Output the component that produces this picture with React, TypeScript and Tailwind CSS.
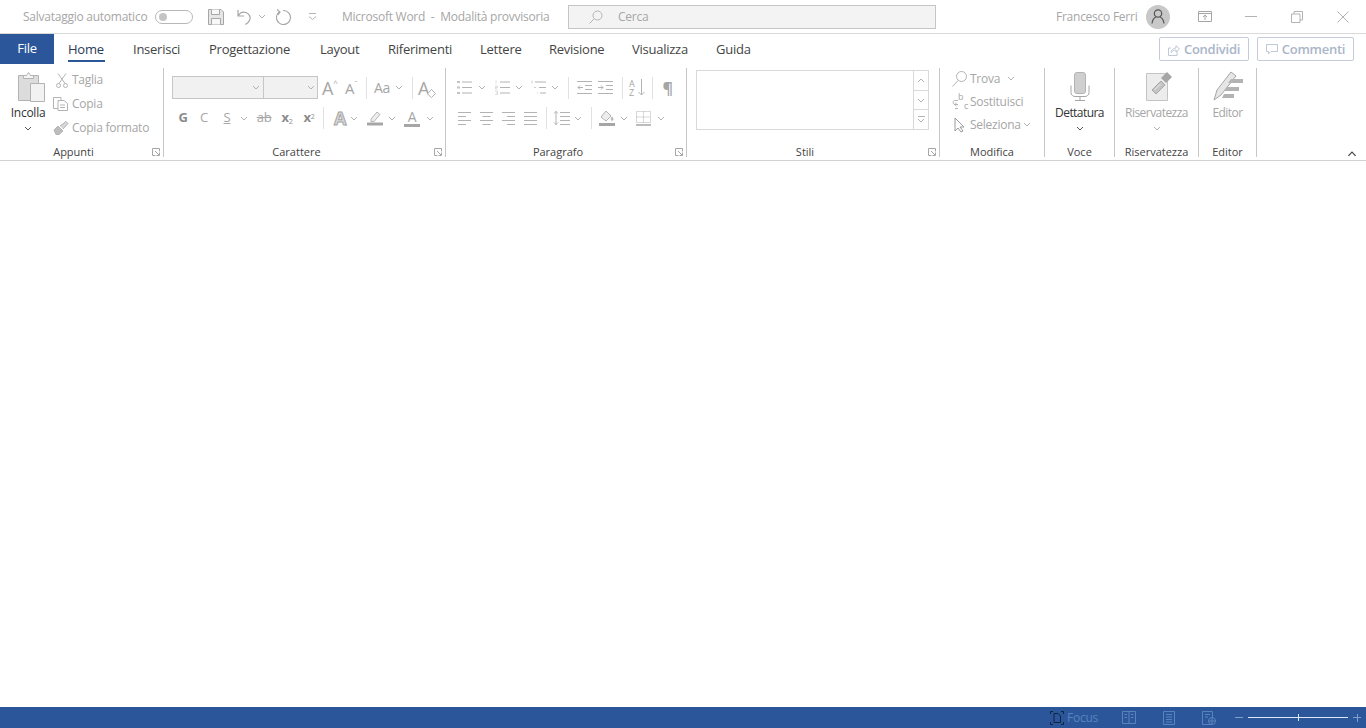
import React from "react";

const FONT = "font-['Open_Sans','Noto_Sans',sans-serif]";
const GRAY = "#b3b3b3";

const Chev = ({ className = "", color = GRAY }: { className?: string; color?: string }) => (
  <svg viewBox="0 0 8 5" className={`w-[8px] h-[5px] shrink-0 ${className}`}>
    <path d="M1 1l3 3 3-3" fill="none" stroke={color} strokeWidth="1" />
  </svg>
);

const Sep = ({ className = "" }: { className?: string }) => <span className={`w-px h-[22px] shrink-0 bg-[#e1e1e1] ${className}`} />;

type IconProps = { className?: string; children: React.ReactNode; view: string };
const Ic = ({ className = "", children, view }: IconProps) => (
  <svg viewBox={view} className={`shrink-0 ${className}`} fill="none" stroke={GRAY} strokeWidth="1">
    {children}
  </svg>
);

const Bullets = ({ kind }: { kind: "dot" | "num" | "multi" }) => (
  <Ic view="0 0 15 15" className="w-[15px] h-[15px]">
    {kind === "dot" && (
      <>
        <path d="M0 2h3M0 7.5h3M0 13h3" strokeWidth="2" stroke="#c4c4c4" />
        <path d="M5 2h10M5 7.5h10M5 13h10" />
      </>
    )}
    {kind === "num" && (
      <>
        <path d="M1 0.5v3M0 6h2.5v1.5H0V9h2.5M0 11h2.5v3.5H0M1 13h1.5" stroke="#cfcfcf" strokeWidth="0.7" />
        <path d="M5 2h10M5 7.5h10M5 13h10" />
      </>
    )}
    {kind === "multi" && (
      <>
        <path d="M1 0.5v3M3 7.5h2M6 13h1" stroke="#cfcfcf" />
        <path d="M4 2h11M8 7.5h7M9 13h6" />
      </>
    )}
  </Ic>
);

const Align = ({ d }: { d: string }) => (
  <Ic view="0 0 13 13" className="w-[13px] h-[13px]">
    <path d={d} />
  </Ic>
);

const Launcher = () => (
  <svg viewBox="0 0 8 8" className="absolute right-[3px] top-[2px] w-[8px] h-[8px]" fill="none" stroke="#a6a6a6">
    <path d="M7.5 3.5V0.5H0.5V7.5H3.5" />
    <path d="M3 3l4 4M7.5 4.5v3h-3" />
  </svg>
);

const Group = ({
  label,
  width,
  launcher,
  children,
}: {
  label: string;
  width: string;
  launcher?: boolean;
  children: React.ReactNode;
}) => (
  <section className={`h-[89px] shrink-0 flex flex-col border-r border-[#c6c6c6] ${width}`}>
    <div className="h-[78px] shrink-0">{children}</div>
    <div className={`relative h-[11px] text-center text-[11px] leading-[12px] tracking-normal text-[#444] ${launcher ? "pr-[16px]" : ""}`}>
      {label}
      {launcher && <Launcher />}
    </div>
  </section>
);

const TABS = [
  { name: "Inserisci", cls: "ml-[28px] w-[46px]" },
  { name: "Progettazione", cls: "ml-[30px] w-[81px]" },
  { name: "Layout", cls: "ml-[30px] w-[38px]" },
  { name: "Riferimenti", cls: "ml-[30px] w-[62px]" },
  { name: "Lettere", cls: "ml-[30px] w-[40px]" },
  { name: "Revisione", cls: "ml-[29px] w-[55px]" },
  { name: "Visualizza", cls: "ml-[28px] w-[56px]" },
  { name: "Guida", cls: "ml-[28px] w-[34px]" },
];

const TitleBar = () => (
  <header className="h-[34px] shrink-0 flex items-center pl-[23px] border-b border-[#d9d9d9] text-[12px] text-[#a6a6a6] whitespace-nowrap">
    <span className="w-[132px]">Salvataggio automatico</span>
    <span className="w-[38px] h-[14px] rounded-full border border-[#b8b8b8] flex items-center pl-[3px]">
      <span className="w-[8px] h-[8px] rounded-full bg-[#c4c4c4]" />
    </span>
    <Ic view="0 0 16 16" className="ml-[15px] w-[16px] h-[16px]">
      <path d="M.5.5h12.5l2.5 2.500v12.500H.5z" fill="#e6e6e6" stroke="#a6a6a6" />
      <path d="M3.500.5v5h8v-5M3.500 15.500v-6h9v6" stroke="#a6a6a6" fill="#f8f8f8" />
    </Ic>
    <Ic view="0 0 15 16" className="ml-[13px] w-[15px] h-[16px]">
      <path d="M1 1v6h6M1.500 6.500C3 3.500 6 2.500 9 3.500c3.500 1.200 5 5 3.500 8-.7 1.500-2 3-4 4" stroke="#a6a6a6" strokeWidth="1.200" />
    </Ic>
    <Chev className="ml-[6px]" />
    <Ic view="0 0 16 16" className="ml-[10px] w-[16px] h-[16px]">
      <path d="M7 1.500a7 7 0 1 1-3.500 1.200M1 .5l3 2.500-2 3" stroke="#a6a6a6" strokeWidth="1.100" />
    </Ic>
    <Ic view="0 0 9 8" className="ml-[16px] w-[9px] h-[8px]">
      <path d="M1 .5h7M1 3.500l3.500 3 3.500-3" />
    </Ic>
    <span className="ml-[25px] w-[226px]">Microsoft Word&nbsp; -&nbsp; Modalità provvisoria</span>
    <div className="w-[368px] h-[24px] bg-[#f3f3f3] border border-[#c6c6c6] flex items-center pl-[20px]">
      <Ic view="0 0 14 14" className="w-[14px] h-[14px]">
        <circle cx="8.500" cy="5.500" r="4.500" />
        <path d="M5 9l-4.500 4.500" />
      </Ic>
      <span className="ml-[15px]">Cerca</span>
    </div>
    <span className="ml-[120px] w-[90px]">Francesco Ferri</span>
    <span className="w-[24px] h-[24px] rounded-full bg-[#c8c8c8] flex items-center justify-center">
      <svg viewBox="0 0 14 15" className="w-[14px] h-[15px]" fill="none" stroke="#555" strokeWidth="1.200">
        <circle cx="7" cy="4.500" r="3.700" />
        <path d="M1 14.500c.5-3.500 2.500-6 4-6.500M13 14.500c-.5-3.500-2.500-6-4-6.500" />
      </svg>
    </span>
    <Ic view="0 0 14 11" className="ml-[28px] w-[14px] h-[11px]">
      <path d="M.5.5h13v10H.5zM.5 2.500h13M7 9V4.500M5 6l2-2 2 2" stroke="#a6a6a6" />
    </Ic>
    <span className="ml-[33px] w-[12px] h-px bg-[#b3b3b3]" />
    <Ic view="0 0 12 12" className="ml-[34px] w-[12px] h-[12px]">
      <path d="M.5 3h8.500v8.500H.5zM3 3V.5h8.500V9H9" />
    </Ic>
    <Ic view="0 0 12 12" className="ml-[34px] w-[12px] h-[12px]">
      <path d="M.5.5l11 11M11.500.5l-11 11" />
    </Ic>
  </header>
);

const TabsRow = () => (
  <nav className="h-[30px] shrink-0 flex items-center pt-px text-[13px] text-[#444] whitespace-nowrap">
    <span className="w-[54px] h-[30px] -mt-px bg-[#2b579a] text-white flex items-center justify-center">File</span>
    <span className="relative ml-[14px] w-[37px] h-[29px] flex items-center font-medium text-[#2b3a55]">
      Home
      <span className="absolute left-0 right-0 bottom-[2px] h-[2px] bg-[#2b579a]" />
    </span>
    {TABS.map((t) => (
      <span key={t.name} className={t.cls}>
        {t.name}
      </span>
    ))}
    <button className="ml-auto -mt-px pt-px w-[90px] h-[24px] rounded-[2px] border border-[#c3ccd8] flex items-center justify-center gap-[4px] font-semibold text-[#a9b6c9]">
      <svg viewBox="0 0 12 12" className="w-[12px] h-[12px]" fill="none" stroke="#c0c9d6">
        <path d="M9 6.500v5H.5V4H3M3 8.500C3.500 5.500 5.500 4 8 4V1.500L11.500 5 8 8V6C6 6 4.500 7 3 8.500z" />
      </svg>
      Condividi
    </button>
    <button className="ml-[8px] -mt-px pt-px mr-[12px] w-[97px] h-[24px] rounded-[2px] border border-[#c3ccd8] flex items-center justify-center gap-[4px] font-semibold text-[#a9b6c9]">
      <svg viewBox="0 0 12 11" className="w-[12px] h-[11px]" fill="none" stroke="#c0c9d6">
        <path d="M.5.5h11v7H5L2.500 10V7.500h-2z" />
      </svg>
      Commenti
    </button>
  </nav>
);

const Appunti = () => (
  <div className="flex">
    <div className="w-[53px] pl-[3px] pt-[4px] flex flex-col items-center">
      <svg viewBox="0 0 28 30" className="ml-[7px] w-[28px] h-[30px]" fill="none">
        <path d="M.5 3.500h20v25H.5z" fill="#dcdcdc" stroke="#b3b3b3" />
        <path d="M5.500 3.500h3L10.500.5l2 3h3v3h-10z" fill="#f4f4f4" stroke="#b3b3b3" />
        <path d="M12.500 11.500h14v18h-14z" fill="#f2f2f2" stroke="#b3b3b3" />
      </svg>
      <span className="mt-[3px] text-[12px] leading-[16px] text-[#333]">Incolla</span>
      <Chev className="mt-[5px]" color="#555" />
    </div>
    <div className="text-[12px] text-[#a6a6a6]">
      <div className="h-[24px] flex items-center">
        <Ic view="0 0 12 15" className="ml-[3px] w-[12px] h-[15px]">
          <path d="M2 .5l7 10M10 .5l-7 10" />
          <circle cx="2.500" cy="12.500" r="2" />
          <circle cx="9.500" cy="12.500" r="2" />
        </Ic>
        <span className="ml-[4px]">Taglia</span>
      </div>
      <div className="h-[24px] flex items-center">
        <Ic view="0 0 16 14" className="w-[16px] h-[14px]">
          <path d="M5 11.500H.5V.5H8L8 3" />
          <path d="M5 3.500h6l3.500 3v7H5zM7 8h5M7 10.500h5" />
        </Ic>
        <span className="ml-[3px]">Copia</span>
      </div>
      <div className="h-[24px] flex items-center">
        <Ic view="0 0 16 14" className="w-[16px] h-[14px]">
          <path d="M1 9l4-4 5 5-4 3.500H3z" fill="#bdbdbd" />
          <path d="M7 5l6-4.500 2 2L10 8" fill="#d6d6d6" />
        </Ic>
        <span className="ml-[3px]">Copia formato</span>
      </div>
    </div>
  </div>
);

const Carattere = () => (
  <div className="pl-[8px] pt-[8px]">
    <div className="flex items-center h-[23px] text-[#a6a6a6]">
      <span className="w-[92px] h-[23px] bg-[#f1f1f1] border border-[#c6c6c6] flex items-center justify-end pr-[3px]">
        <Chev />
      </span>
      <span className="-ml-px w-[55px] h-[23px] bg-[#f1f1f1] border border-[#c6c6c6] flex items-center justify-end pr-[2px]">
        <Chev />
      </span>
      <span className="ml-[4px] w-[16px] flex items-start text-[18px] leading-[20px]">
        A<span className="text-[8px] leading-[10px]">^</span>
      </span>
      <span className="ml-[7px] w-[14px] flex items-start text-[15px] leading-[20px]">
        A<span className="text-[8px] leading-[10px]">ˇ</span>
      </span>
      <Sep className="ml-[7px]" />
      <span className="ml-[7px] w-[19px] text-[14px]">Aa</span>
      <Chev className="ml-[2px]" />
      <Sep className="ml-[9px]" />
      <span className="ml-[5px] relative w-[18px] text-[18px] leading-[20px]">
        A
        <svg viewBox="0 0 9 9" className="absolute right-0 bottom-0 w-[9px] h-[9px]" fill="#fff" stroke={GRAY}>
          <path d="M.5 5l4-4.500 4 4-4 4z" />
        </svg>
      </span>
    </div>
    <div className="mt-[9px] flex items-center h-[20px] text-[13px] text-[#a6a6a6]">
      <span className="w-[22px] text-center font-bold text-[#8c8c8c]">G</span>
      <span className="w-[20px] text-center">C</span>
      <span className="ml-[3px] w-[20px] text-center underline">S</span>
      <Chev className="ml-[3px]" />
      <span className="ml-[6px] w-[20px] text-center line-through">ab</span>
      <span className="ml-[3px] w-[20px] text-center font-bold text-[#8c8c8c]">
        x<sub className="text-[7px] font-normal">2</sub>
      </span>
      <span className="ml-[2px] w-[20px] text-center font-bold text-[#8c8c8c]">
        x<sup className="text-[7px] font-normal">2</sup>
      </span>
      <Sep className="ml-[4px]" />
      <span className="ml-[8px] w-[16px] text-center text-[18px] leading-[20px] font-bold text-[#d9d9d9] [-webkit-text-stroke:1px_#a6a6a6]">A</span>
      <Chev className="ml-[2px]" />
      <Ic view="0 0 16 16" className="ml-[9px] w-[16px] h-[16px]">
        <path d="M4 9l6-7 3 2.500-6 7H4z" fill="#eee" />
        <path d="M0 14h16" stroke="#a6a6a6" strokeWidth="3" />
      </Ic>
      <Chev className="ml-[5px]" />
      <span className="ml-[8px] w-[16px] h-[18px] flex flex-col items-center text-[14px] leading-[15px]">
        A<span className="w-[16px] h-[3px] bg-[#a6a6a6]" />
      </span>
      <Chev className="ml-[6px]" />
    </div>
  </div>
);

const Paragrafo = () => (
  <div className="pt-[8px]">
    <div className="pl-[11px] flex items-center h-[23px]">
      <Bullets kind="dot" />
      <Chev className="ml-[6px]" />
      <span className="ml-[9px]">
        <Bullets kind="num" />
      </span>
      <Chev className="ml-[5px]" />
      <span className="ml-[8px]">
        <Bullets kind="multi" />
      </span>
      <Chev className="ml-[5px]" />
      <Sep className="ml-[9px]" />
      <Ic view="0 0 15 13" className="ml-[8px] w-[15px] h-[13px]">
        <path d="M0 .5h15M8 4.500h7M8 8.500h7M0 12.500h15M6 6.500H1M3 4.500l-2 2 2 2" />
      </Ic>
      <Ic view="0 0 15 13" className="ml-[6px] w-[15px] h-[13px]">
        <path d="M0 .5h15M8 4.500h7M8 8.500h7M0 12.500h15M0 6.500h5M3 4.500l2 2-2 2" />
      </Ic>
      <Sep className="ml-[9px]" />
      <span className="ml-[6px] w-[16px] flex items-center">
        <span className="w-[7px] break-all text-[9px] leading-[9px] tracking-normal text-[#a6a6a6]">AZ</span>
        <Ic view="0 0 7 17" className="ml-[2px] w-[7px] h-[17px]">
          <path d="M3.500 0v16M.5 13l3 3 3-3" />
        </Ic>
      </span>
      <Sep className="ml-[7px]" />
      <span className="ml-[8px] w-[13px] text-center text-[16px] leading-[20px] font-bold text-[#a6a6a6]">¶</span>
    </div>
    <div className="mt-[9px] pl-[12px] flex items-center h-[20px]">
      <Align d="M0 .5h13M0 4.500h8M0 8.500h13M0 12.500h8" />
      <span className="ml-[9px] flex">
        <Align d="M0 .5h13M2.500 4.500h8M0 8.500h13M2.500 12.500h8" />
      </span>
      <span className="ml-[9px] flex">
        <Align d="M0 .5h13M5 4.500h8M0 8.500h13M5 12.500h8" />
      </span>
      <span className="ml-[9px] flex">
        <Align d="M0 .5h13M0 4.500h13M0 8.500h13M0 12.500h13" />
      </span>
      <Sep className="ml-[9px]" />
      <Ic view="0 0 17 14" className="ml-[6px] w-[17px] h-[14px]">
        <path d="M7 1.500h10M7 5.500h10M7 9.500h10M7 13.500h10M3 0v14M1 2.500L3 .5l2 2M1 11.500l2 2 2-2" />
      </Ic>
      <Chev className="ml-[4px]" />
      <Sep className="ml-[9px]" />
      <Ic view="0 0 16 16" className="ml-[7px] w-[16px] h-[16px]">
        <path d="M2 7l5-6 5 5-5 5z" fill="#eee" />
        <path d="M13 7c1 1.500 1.500 3 0 3.500-1 0-1-2 0-3.500z" fill="#bdbdbd" />
        <path d="M0 14.500h16" stroke="#a6a6a6" strokeWidth="3" />
      </Ic>
      <Chev className="ml-[5px]" />
      <Ic view="0 0 15 15" className="ml-[8px] w-[15px] h-[15px]">
        <path d="M.5.5h14v11H.5zM7.500.5v11M.5 6h14" strokeDasharray="1 1" />
        <path d="M0 14h15" stroke="#a6a6a6" strokeWidth="1.500" />
      </Ic>
      <Chev className="ml-[6px]" />
    </div>
  </div>
);

const Stili = () => (
  <div className="pl-[9px] pt-[2px]">
    <div className="w-[233px] h-[60px] border border-[#d9d9d9] flex justify-end">
      <div className="w-[15px] border-l border-[#d9d9d9] flex flex-col">
        <span className="h-[20px] border-b border-[#d9d9d9] flex items-center justify-center">
          <Chev className="rotate-180" />
        </span>
        <span className="h-[19px] border-b border-[#d9d9d9] flex items-center justify-center">
          <Chev />
        </span>
        <span className="flex-1 flex flex-col items-center justify-center gap-[1px]">
          <span className="w-[7px] h-px bg-[#b3b3b3]" />
          <Chev />
        </span>
      </div>
    </div>
  </div>
);

const Modifica = () => (
  <div className="pl-[12px] text-[12px] text-[#a6a6a6]">
    <div className="h-[23px] -mt-px flex items-center">
      <Ic view="0 0 15 16" className="w-[15px] h-[16px]">
        <circle cx="9.500" cy="5.500" r="5" />
        <path d="M6 9.500l-5.500 6" />
      </Ic>
      <span className="ml-[3px] w-[37px]">Trova</span>
      <Chev />
    </div>
    <div className="h-[23px] flex items-center">
      <span className="relative w-[15px] h-[16px] shrink-0">
        <Ic view="0 0 7 9" className="absolute left-0 top-[6px] w-[7px] h-[9px]">
          <path d="M6 .5H3C.5.5.5 4.500 3 4.500h3M6 8.500H3M4.500 3l-2 1.500 2 1.500" />
        </Ic>
        <span className="absolute left-[6px] top-[-2px] text-[9px] leading-[10px] tracking-normal">b</span>
        <span className="absolute left-[12px] top-[7px] text-[9px] leading-[10px] tracking-normal">c</span>
      </span>
      <span className="ml-[3px]">Sostituisci</span>
    </div>
    <div className="h-[23px] flex items-center">
      <Ic view="0 0 15 16" className="w-[15px] h-[16px]">
        <path d="M3 1v13l3-3 3 4 2-1-3-4h4z" stroke="#9a9a9a" />
      </Ic>
      <span className="ml-[3px]">Seleziona</span>
      <Chev className="ml-[2px]" />
    </div>
  </div>
);

const Big = ({ label, dark, children }: { label: string; dark?: boolean; children: React.ReactNode }) => (
  <div className="flex flex-col items-center pt-[2px]">
    <div className="h-[32px] flex items-center justify-center">{children}</div>
    <span className={`mt-[3px] text-[12px] leading-[16px] tracking-[-0.55px] ${dark ? "text-[#333]" : "text-[#a6a6a6]"}`}>{label}</span>
  </div>
);

const App = () => (
  <div className={`h-screen w-full flex flex-col overflow-hidden bg-white tracking-[-0.25px] ${FONT}`}>
    <TitleBar />
    <TabsRow />
    <div className="h-[97px] shrink-0 pt-[4px] flex border-b border-[#d2d2d2] shadow-[0_2px_3px_rgba(0,0,0,0.06)]">
      <Group label="Appunti" width="w-[164px]" launcher>
        <Appunti />
      </Group>
      <Group label="Carattere" width="w-[282px]" launcher>
        <Carattere />
      </Group>
      <Group label="Paragrafo" width="w-[241px]" launcher>
        <Paragrafo />
      </Group>
      <Group label="Stili" width="w-[253px]" launcher>
        <Stili />
      </Group>
      <Group label="Modifica" width="w-[105px]">
        <Modifica />
      </Group>
      <Group label="Voce" width="w-[70px]">
        <Big label="Dettatura" dark>
          <svg viewBox="0 0 20 30" className="w-[20px] h-[30px]" fill="none" stroke="#a6a6a6">
            <rect x="4.500" y="1.500" width="11" height="21" rx="2.500" fill="#cfcfcf" stroke="#b3b3b3" />
            <path d="M1 14.500v7c0 2.500 2 4 4 4h10c2 0 4-1.500 4-4v-7M10 25.500v3.500M5 29.500h10" />
          </svg>
        </Big>
        <div className="flex justify-center mt-[5px]">
          <Chev color="#555" />
        </div>
      </Group>
      <Group label="Riservatezza" width="w-[84px]">
        <Big label="Riservatezza">
          <svg viewBox="0 0 28 30" className="ml-[4px] w-[28px] h-[30px]" fill="none">
            <path d="M1.500 2.500h21v27h-21z" fill="#ececec" stroke="#c4c4c4" />
            <path d="M7 19l9-9 4 4-9 9z" fill="#c4c4c4" stroke="#a6a6a6" />
            <path d="M9.500 19l6-6" stroke="#ececec" />
            <path d="M16 7l6-6 5 5-6 6z" fill="#a6a6a6" />
          </svg>
        </Big>
        <div className="flex justify-center mt-[5px]">
          <Chev />
        </div>
      </Group>
      <Group label="Editor" width="w-[58px]">
        <Big label="Editor">
          <svg viewBox="0 0 30 30" className="w-[30px] h-[30px]" fill="none">
            <path d="M1 29l3-10L18 1l5 4L8 24z" fill="#e6e6e6" stroke="#a6a6a6" />
            <path d="M18 8h12v4H15zM14 16h12v4H11zM11 23h10v4H9z" fill="#b3b3b3" />
          </svg>
        </Big>
      </Group>
      <div className="flex-1 flex items-end justify-end pr-[9px] pb-[3px]">
        <Chev className="rotate-180 w-[10px] h-[6px]" color="#444" />
      </div>
    </div>
    <main className="flex-1 bg-white" />
    <footer className="h-[21px] shrink-0 bg-[#2b579a] flex items-center pl-[1050px] text-[12px] text-[#5a82bd]">
      <svg viewBox="0 0 14 14" className="w-[14px] h-[14px]" fill="none" stroke="#10233f">
        <path d="M.5 3V.5H3M11 .5h2.500V3M13.500 11v2.500H11M3 13.500H.5V11" />
        <path d="M4 2.500h4l2.500 2.500v6.500H4z" />
      </svg>
      <span className="ml-[3px] w-[55px]">Focus</span>
      <svg viewBox="0 0 14 13" className="w-[14px] h-[13px]" fill="none" stroke="#5a82bd">
        <path d="M.5.5h13v12H.5zM7 .5v12M2.500 3.500h2.500M2.500 6.500h2.500M9 3.500h2.500M9 6.500h2.500" />
      </svg>
      <svg viewBox="0 0 12 14" className="ml-[27px] w-[12px] h-[14px]" fill="none" stroke="#5a82bd">
        <path d="M.5.5h11v13H.5zM3 3.500h6M3 6h6M3 8.500h6M3 11h6" />
      </svg>
      <svg viewBox="0 0 14 14" className="ml-[27px] w-[14px] h-[14px]" fill="none" stroke="#5a82bd">
        <path d="M.5.5h10v13H.5zM3 3.500h5M3 6h3" />
        <circle cx="10" cy="10" r="3.500" fill="#2b579a" />
        <path d="M6.500 10h7M10 6.500v7" />
      </svg>
      <span className="ml-[19px] w-[8px] h-px bg-[#7f9fcc]" />
      <span className="relative ml-[5px] w-[100px] h-px bg-[#dfe7f2]">
        <span className="absolute left-[50px] top-[-3px] w-px h-[7px] bg-[#dfe7f2]" />
      </span>
      <span className="relative ml-[5px] w-[8px] h-[8px]">
        <span className="absolute left-0 top-[3.500px] w-[8px] h-px bg-[#7f9fcc]" />
        <span className="absolute left-[3.500px] top-0 w-px h-[8px] bg-[#7f9fcc]" />
      </span>
    </footer>
  </div>
);

export default App;
